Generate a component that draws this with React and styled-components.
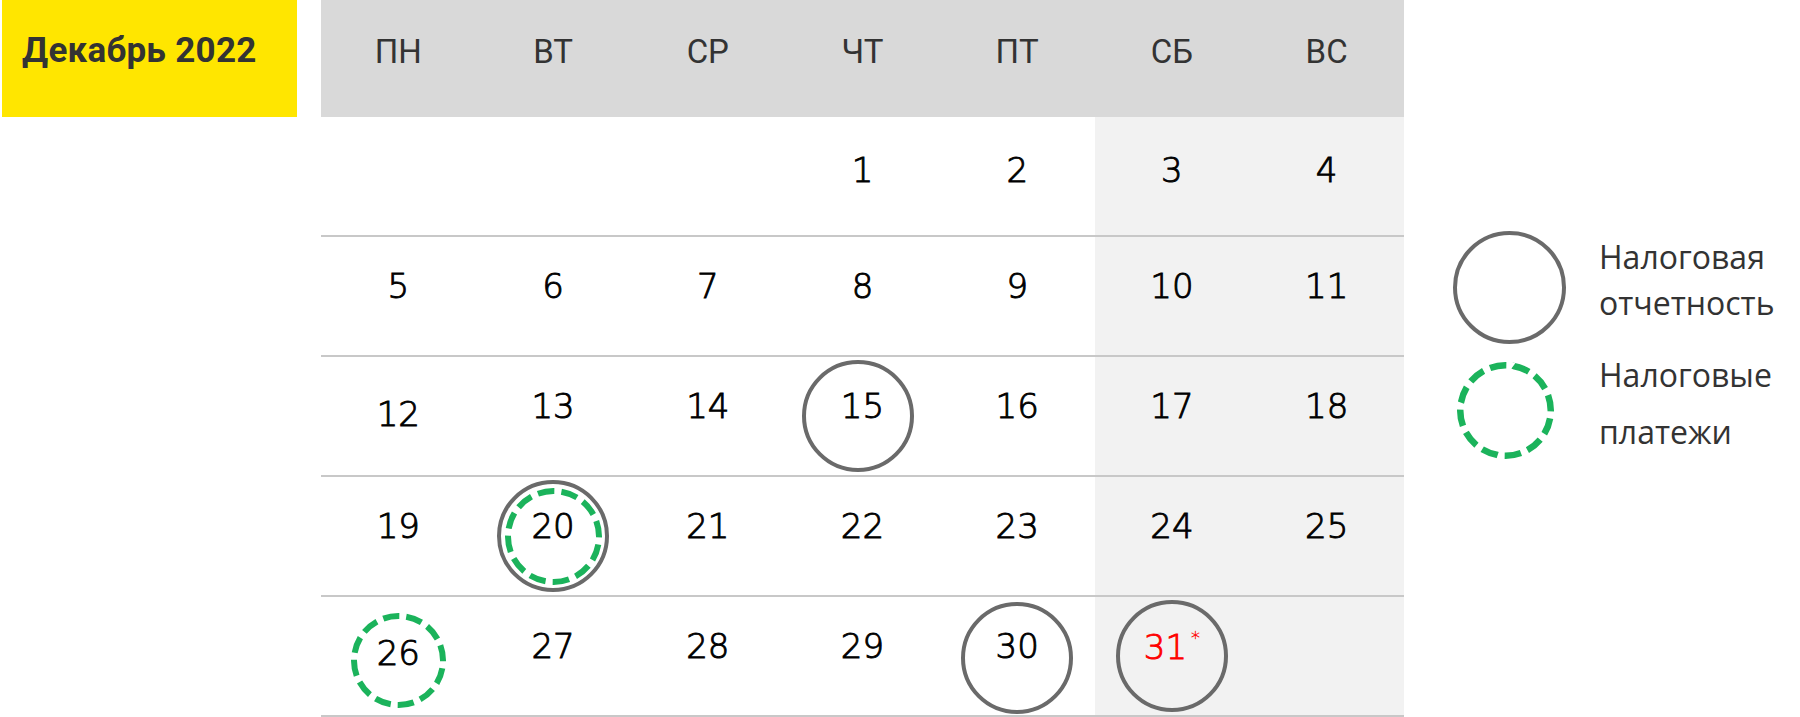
import React from "react";
import styled, { createGlobalStyle } from "styled-components";

const GlobalStyle = createGlobalStyle`
  body {
    margin: 0;
    background: #fff;
  }
`;

const Page = styled.div`
  display: flex;
  align-items: flex-start;
  width: 1800px;
  height: 717px;
  overflow: hidden;
`;

const MonthTitle = styled.div`
  display: flex;
  align-items: center;
  box-sizing: border-box;
  width: 295px;
  height: 117px;
  margin-left: 2px;
  padding: 0 0 16px 20px;
  background: #ffe600;
  color: #333;
  font-family: Roboto, "Liberation Sans", sans-serif;
  font-weight: 700;
  font-size: 35px;
  letter-spacing: 0.3px;
`;

const Calendar = styled.div`
  display: grid;
  grid-template-columns: repeat(7, 1fr);
  width: 1083px;
  margin-left: 24px;
`;

const HeadCell = styled.div`
  display: flex;
  align-items: center;
  justify-content: center;
  height: 117px;
  padding-bottom: 14px;
  box-sizing: border-box;
  background: #d9d9d9;
  color: #333;
  font-family: Roboto, "Liberation Sans", sans-serif;
  font-weight: 400;
  font-size: 33px;
  line-height: 1;
`;

const DayCell = styled.div`
  position: relative;
  display: flex;
  align-items: center;
  justify-content: center;
  height: 120px;
  box-sizing: border-box;
  border-bottom: 2px solid #c8c8c8;
  background: ${({ $weekend }) => ($weekend ? "#f2f2f2" : "#fff")};
`;

const DayNum = styled.span`
  position: relative;
  z-index: 1;
  margin-bottom: ${({ $shift }) => $shift * 2}px;
  color: ${({ $red }) => ($red ? "#ff0000" : "#000")};
  font-family: "DejaVu Sans", Verdana, sans-serif;
  font-weight: 300;
  font-size: 34px;
  line-height: 1;
  -webkit-text-stroke: 0.9px currentColor;
`;

const Star = styled.span`
  margin-left: 4px;
  font-size: 18px;
  vertical-align: 15px;
  -webkit-text-stroke: 0.3px currentColor;
`;

const Ring = styled.div`
  position: absolute;
  left: 50%;
  top: 50%;
  width: 112px;
  height: 112px;
  box-sizing: border-box;
  margin: ${({ $dy = 0 }) => -56 + $dy}px 0 0 ${({ $dx = 0 }) => -56 + $dx}px;
  border: 4px solid #6a6a6a;
  border-radius: 50%;
`;

const DashWrap = styled.svg`
  position: absolute;
  left: 50%;
  top: 50%;
  width: ${({ $size }) => $size}px;
  height: ${({ $size }) => $size}px;
  margin: ${({ $size, $dy = 0 }) => -$size / 2 + $dy}px 0 0
    ${({ $size, $dx = 0 }) => -$size / 2 + $dx}px;
`;

const LegendSvg = styled.svg`
  width: ${({ $size }) => $size}px;
  height: ${({ $size }) => $size}px;
  margin-left: 4px;
`;

const GREEN = "#1bb35b";

function DashedCircle({ size, stroke = 6, dx, dy, inline }) {
  const r = (size - stroke) / 2;
  const Svg = inline ? LegendSvg : DashWrap;
  return (
    <Svg $size={size} $dx={dx} $dy={dy} viewBox={`0 0 ${size} ${size}`}>
      <circle
        cx={size / 2}
        cy={size / 2}
        r={r}
        fill="none"
        stroke={GREEN}
        strokeWidth={stroke}
        pathLength="120"
        strokeDasharray="7 3"
        transform={`rotate(-80 ${size / 2} ${size / 2})`}
      />
    </Svg>
  );
}

const Legend = styled.div`
  display: flex;
  flex-direction: column;
  gap: 18px;
  margin-left: 49px;
  padding-top: 231px;
`;

const LegendItem = styled.div`
  display: flex;
  align-items: flex-start;
  gap: 30px;
`;

const LegendIcon = styled.div`
  display: flex;
  align-items: center;
  width: 116px;
  height: ${({ $h }) => $h}px;
`;

const LegendRing = styled.div`
  width: 113px;
  height: 113px;
  box-sizing: border-box;
  border: 4px solid #6a6a6a;
  border-radius: 50%;
`;

const LegendLabel = styled.div`
  margin-top: ${({ $mt }) => $mt}px;
  color: #333;
  font-family: "Open Sans", "Noto Sans", sans-serif;
  font-size: 32px;
  line-height: ${({ $lh }) => $lh}px;
`;

const heads = ["ПН", "ВТ", "СР", "ЧТ", "ПТ", "СБ", "ВС"];

const weeks = [
  [null, null, null, 1, 2, 3, 4],
  [5, 6, 7, 8, 9, 10, 11],
  [12, 13, 14, 15, 16, 17, 18],
  [19, 20, 21, 22, 23, 24, 25],
  [26, 27, 28, 29, 30, 31, null],
];

const marks = {
  15: { report: true, dx: -4 },
  20: { report: true, pay: true },
  26: { pay: true, dy: 4 },
  30: { report: true, dy: 2 },
  31: { report: true, red: true, star: true },
};

const lowDays = { 12: 2, 26: 3 };

export default function App() {
  return (
    <Page>
      <GlobalStyle />
      <MonthTitle>Декабрь 2022</MonthTitle>
      <Calendar>
        {heads.map((h) => (
          <HeadCell key={h}>{h}</HeadCell>
        ))}
        {weeks.map((week, wi) =>
          week.map((d, i) => {
            const m = (d && marks[d]) || {};
            const shift = wi === 0 ? 6 : lowDays[d] ?? 10;
            return (
              <DayCell key={`${wi}-${i}`} $weekend={i >= 5}>
                {m.report && <Ring $dx={m.dx} $dy={m.dy} />}
                {m.pay && (
                  <DashedCircle
                    size={m.report ? 97 : 95}
                    dx={m.dx}
                    dy={m.dy}
                  />
                )}
                {d && (
                  <DayNum $shift={shift} $red={m.red}>
                    {d}
                    {m.star && <Star>*</Star>}
                  </DayNum>
                )}
              </DayCell>
            );
          })
        )}
      </Calendar>
      <Legend>
        <LegendItem>
          <LegendIcon $h={113}>
            <LegendRing />
          </LegendIcon>
          <LegendLabel $lh={46} $mt={3}>
            Налоговая
            <br />
            отчетность
          </LegendLabel>
        </LegendItem>
        <LegendItem>
          <LegendIcon $h={97}>
            <DashedCircle size={97} stroke={6.5} inline />
          </LegendIcon>
          <LegendLabel $lh={57} $mt={-16}>
            Налоговые
            <br />
            платежи
          </LegendLabel>
        </LegendItem>
      </Legend>
    </Page>
  );
}
